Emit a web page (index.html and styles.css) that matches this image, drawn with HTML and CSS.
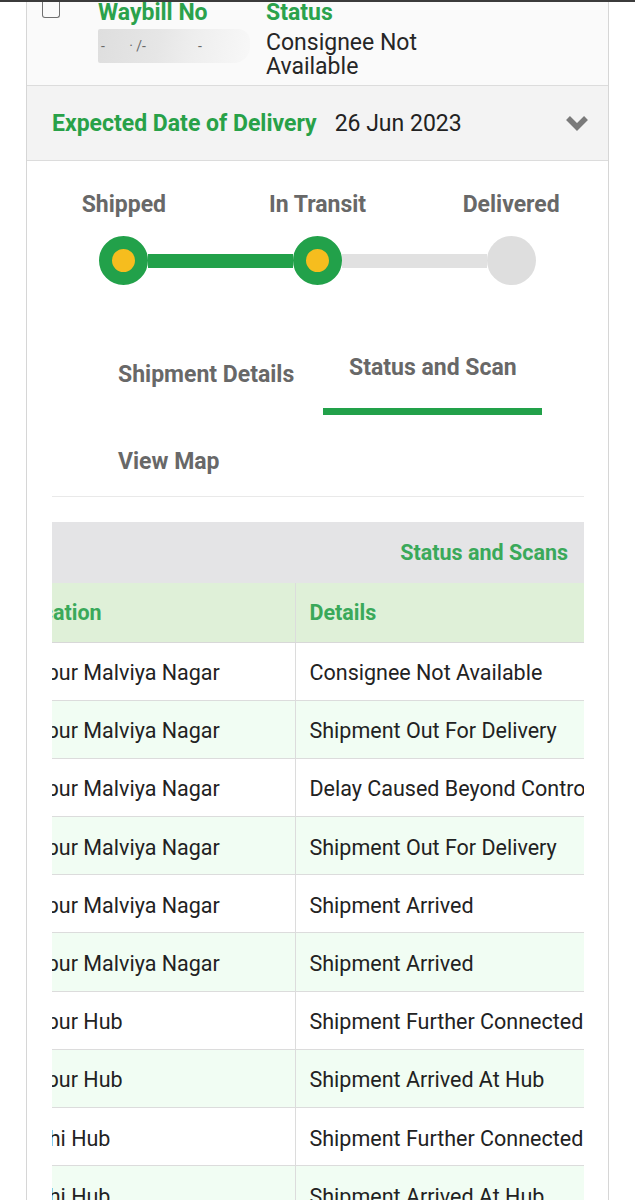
FILE: index.html
```html
<!DOCTYPE html>
<html lang="en">
<head>
<meta charset="UTF-8">
<meta name="viewport" content="width=device-width, initial-scale=1.0">
<title>Track Shipment</title>
<link rel="stylesheet" href="styles.css">
</head>
<body>
<div class="card">
  <div class="waybill">
    <span class="check"></span>
    <div class="wb-col wb-number">
      <div class="wb-label">Waybill No</div>
      <div class="wb-mask"><span class="mask-digits">-&nbsp;&nbsp;&nbsp;&nbsp;&nbsp;&nbsp;&nbsp;·&nbsp;/-&nbsp;&nbsp;&nbsp;&nbsp;&nbsp;&nbsp;&nbsp;&nbsp;&nbsp;&nbsp;&nbsp;&nbsp;&nbsp;&nbsp;&nbsp;-</span></div>
    </div>
    <div class="wb-col">
      <div class="wb-label">Status</div>
      <div class="wb-value">Consignee Not<br>Available</div>
    </div>
  </div>

  <div class="edd">
    <span class="edd-label">Expected Date of Delivery</span>
    <span class="edd-date">26 Jun 2023</span>
    <svg class="chevron" width="24" height="16" viewBox="0 0 24 16">
      <polyline points="3,3 12,12 21,3" fill="none" stroke="#7a7a7a" stroke-width="5.5"/>
    </svg>
  </div>

  <div class="steps">
    <div class="step-labels">
      <span>Shipped</span>
      <span>In Transit</span>
      <span>Delivered</span>
    </div>
    <div class="track">
      <span class="dot done"></span>
      <span class="bar done"></span>
      <span class="dot done"></span>
      <span class="bar"></span>
      <span class="dot"></span>
    </div>
  </div>

  <div class="content">
    <div class="tabs">
      <div class="tab">Shipment Details</div>
      <div class="tab active">Status and Scan</div>
      <div class="tab second-row">View Map</div>
    </div>

    <div class="scans">
      <div class="scans-title">Status and Scans</div>
      <table class="scans-table">
        <thead>
          <tr><th class="loc">Location</th><th>Details</th></tr>
        </thead>
        <tbody>
          <tr><td class="loc">Jaipur Malviya Nagar</td><td>Consignee Not Available</td></tr>
          <tr><td class="loc">Jaipur Malviya Nagar</td><td>Shipment Out For Delivery</td></tr>
          <tr><td class="loc">Jaipur Malviya Nagar</td><td>Delay Caused Beyond Control</td></tr>
          <tr><td class="loc">Jaipur Malviya Nagar</td><td>Shipment Out For Delivery</td></tr>
          <tr><td class="loc">Jaipur Malviya Nagar</td><td>Shipment Arrived</td></tr>
          <tr><td class="loc">Jaipur Malviya Nagar</td><td>Shipment Arrived</td></tr>
          <tr><td class="loc">Jaipur Hub</td><td>Shipment Further Connected</td></tr>
          <tr><td class="loc">Jaipur Hub</td><td>Shipment Arrived At Hub</td></tr>
          <tr><td class="loc">Delhi Hub</td><td>Shipment Further Connected</td></tr>
          <tr><td class="loc">Delhi Hub</td><td>Shipment Arrived At Hub</td></tr>
        </tbody>
      </table>
    </div>
  </div>
</div>
</body>
</html>
```

FILE: styles.css
```css
/* Track shipment page */
body {
  margin: 0;
  border-top: 2px solid #3b3b3b;
  font-family: Roboto, "Liberation Sans", sans-serif;
  color: #222;
  background: #fff;
}
.card {
  margin: 0 26px;
  border-left: 1px solid #d6d6d6;
  border-right: 1px solid #d6d6d6;
  min-height: 1300px;
}

/* waybill row */
.waybill {
  display: flex;
  align-items: flex-start;
  background: #fafafa;
  height: 83px;
}
.check {
  width: 16px;
  height: 15px;
  margin-left: 15px;
  border: 1.5px solid #707070;
  border-top: 0;
  border-radius: 0 0 3px 3px;
}
.wb-col {
  display: flex;
  flex-direction: column;
}
.wb-number {
  width: 168px;
  margin-left: 38px;
}
.wb-label {
  font-size: 23px;
  font-weight: 700;
  line-height: 22px;
  color: #2ba24c;
}
.wb-value {
  margin-top: 7px;
  font-size: 23px;
  line-height: 24px;
  color: #262626;
}
.wb-mask {
  display: flex;
  align-items: center;
  margin-top: 5px;
  width: 152px;
  height: 34px;
  background: linear-gradient(100deg, #dedede 0%, #e6e6e6 40%, #eeeeee 62%, #f4f4f4 85%, #f8f8f8 100%);
  border-radius: 2px 12px 16px 2px;
  overflow: hidden;
}
.mask-digits {
  font-size: 14px;
  color: #6a6a6a;
  white-space: nowrap;
  padding-left: 3px;
}

/* expected date */
.edd {
  display: flex;
  align-items: center;
  height: 74px;
  padding: 0 19px 0 25px;
  background: #f3f3f3;
  border-top: 1px solid #dcdcdc;
  border-bottom: 1px solid #dcdcdc;
  font-size: 23px;
}
.edd-label {
  font-weight: 700;
  color: #28a148;
}
.edd-date {
  margin-left: 18px;
  color: #222;
}
.chevron {
  margin-left: auto;
}

/* progress */
.steps {
  padding-top: 30px;
}
.step-labels {
  display: grid;
  grid-template-columns: 1fr 1fr 1fr;
  text-align: center;
  font-size: 23px;
  font-weight: 700;
  line-height: 28px;
  color: #686868;
}
.track {
  display: grid;
  grid-template-columns: 49px 145px 49px 145px 49px;
  justify-content: center;
  align-items: center;
  margin-top: 17px;
  height: 49px;
}
.dot {
  width: 49px;
  height: 49px;
  border-radius: 50%;
  background: #dedede;
  box-sizing: border-box;
}
.dot.done {
  background: #f6bd1e;
  border: 13px solid #22a14a;
}
.bar {
  height: 14px;
  background: #e1e1e1;
}
.bar.done {
  background: #22a14a;
}

/* tabs */
.content {
  padding: 0 24px 0 25px;
}
.tabs {
  display: flex;
  flex-wrap: wrap;
  column-gap: 12px;
  margin-top: 56px;
  padding-left: 40px;
  border-bottom: 1px solid #e9e9e9;
}
.tab {
  box-sizing: border-box;
  width: 219px;
  padding: 20px 26px 26px;
  font-size: 23px;
  font-weight: 700;
  line-height: 28px;
  color: #686868;
  white-space: nowrap;
}
.tab.active {
  padding-top: 13px;
  border-bottom: 7px solid #22a14a;
}
.tab.second-row {
  padding: 33px 26px 20px;
}

/* status and scans table */
.scans {
  margin-top: 25px;
  overflow: hidden;
}
.scans-title {
  height: 61px;
  line-height: 61px;
  padding-right: 16px;
  text-align: right;
  background: #e4e4e6;
  font-size: 21.5px;
  font-weight: 700;
  color: #3aa95a;
}
.scans-table {
  border-collapse: collapse;
  margin-left: -48px;
  width: 708px;
  table-layout: fixed;
  font-size: 21.5px;
}
.scans-table th,
.scans-table td {
  box-sizing: border-box;
  padding: 0 14px;
  text-align: left;
  white-space: nowrap;
  overflow: hidden;
  border-left: 1px solid #dcdcdc;
}
.scans-table .loc {
  width: 291px;
  border-left: 0;
}
.scans-table th {
  height: 59px;
  background: #dff0d8;
  color: #3aa95a;
  font-weight: 700;
  border-bottom: 1px solid #d8d8d8;
}
.scans-table td {
  height: 58.2px;
  padding-top: 3px;
  border-top: 1px solid #dcdcdc;
  color: #222;
}
.scans-table tbody tr:nth-child(even) td {
  background: #f1fdf3;
}
```
